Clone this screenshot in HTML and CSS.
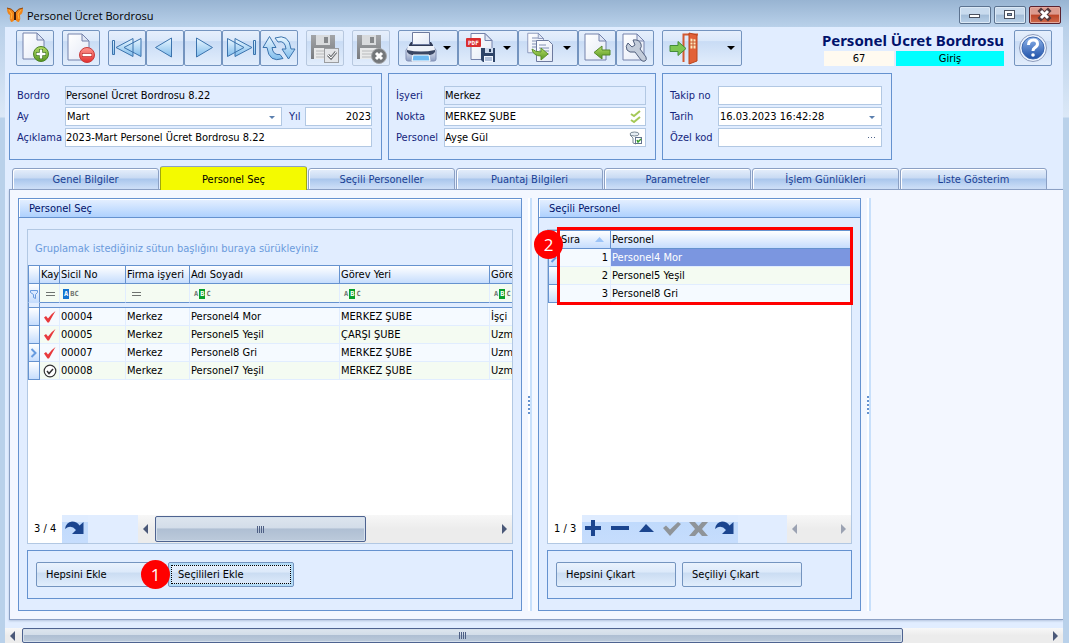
FILE: index.html
```html
<!DOCTYPE html>
<html lang="tr">
<head>
<meta charset="utf-8">
<title>Personel Ücret Bordrosu</title>
<link rel="stylesheet" href="styles.css">
</head>
<body>
<svg class="defs" aria-hidden="true">
  <defs>
    <linearGradient id="g-page" x1="0" y1="0" x2="1" y2="1"><stop offset="0" stop-color="#fff"/><stop offset="1" stop-color="#e3e9f6"/></linearGradient>
    <linearGradient id="g-green" x1="0" y1="0" x2="0" y2="1"><stop offset="0" stop-color="#b5dd66"/><stop offset="1" stop-color="#559520"/></linearGradient>
    <linearGradient id="g-red" x1="0" y1="0" x2="0" y2="1"><stop offset="0" stop-color="#ff9a92"/><stop offset="1" stop-color="#e32d2d"/></linearGradient>
    <linearGradient id="g-blue" x1="0" y1="0" x2="0" y2="1"><stop offset="0" stop-color="#eaf7ff"/><stop offset="1" stop-color="#7fbcec"/></linearGradient>
    <linearGradient id="g-steel" x1="0" y1="0" x2="0" y2="1"><stop offset="0" stop-color="#fff"/><stop offset="1" stop-color="#8e9fc4"/></linearGradient>
    <linearGradient id="g-help" x1="0" y1="0" x2="0" y2="1"><stop offset="0" stop-color="#8fb4ea"/><stop offset="1" stop-color="#1d50a8"/></linearGradient>
    <linearGradient id="g-grey" x1="0" y1="0" x2="0" y2="1"><stop offset="0" stop-color="#a3a5a8"/><stop offset="1" stop-color="#797c80"/></linearGradient>
    <symbol id="i-page" viewBox="0 0 24 28"><path d="M1 1h14l7 7v19H1z" fill="url(#g-page)" stroke="#7482ab"/><path d="M15 1v7h7z" fill="#dfe6f5" stroke="#7482ab"/></symbol>
    <symbol id="i-redo" viewBox="0 0 26 28"><path d="M3 14Q4 7 10 6.500q5 0 7.500 4L21.500 7v12H10l4-4Q9 9 3 14z" fill="#1b458f"/></symbol>
    <symbol id="i-tick" viewBox="0 0 14 14"><path d="M1 7.500l2-1.500 2 2.500Q8 4 12.500 1 9.500 6 6 12.500H4.500z" fill="#e8393c"/></symbol>
    <symbol id="i-floppy" viewBox="0 0 26 26"><path d="M1 1h24v24H1z" fill="url(#g-grey)"/><path d="M6 1h14v10H6z" fill="#d9dbdd"/><path d="M14 3h4v6h-4z" fill="#85888b"/><path d="M4 14h18v11H4z" fill="#e8e9ea"/><path d="M6 17h14M6 20h14M6 23h14" stroke="#b8babc"/></symbol>
  </defs>
</svg>

<header class="titlebar">
  <svg class="app-icon" viewBox="0 0 16 16"><path d="M8 6Q5 1 0 1q0 6 3 7-1 4 1 7 3 0 4-4 1 4 4 4 2-3 1-7 3-1 3-7-5 0-8 5z" fill="#f08418"/><path d="M2 3l3 4-1 5M14 3l-3 4 1 5" stroke="#ffb640" fill="none"/><path d="M0 1q5 0 8 5 3-5 8-5" stroke="#8b4914" fill="none"/><path d="M8 5v8" stroke="#41200e" stroke-width="2"/></svg>
  <span class="window-name">Personel Ücret Bordrosu</span>
  <div class="window-buttons">
    <button class="win-btn" aria-label="Küçült"><svg viewBox="0 0 29 16"><rect x="9.500" y="7.500" width="10" height="3" fill="#fff" stroke="#4a5160"/></svg></button>
    <button class="win-btn" aria-label="Ekranı kapla"><svg viewBox="0 0 29 16"><rect x="9.500" y="3.500" width="10" height="8" fill="#fff" stroke="#4a5160"/><rect x="12.500" y="6.500" width="4" height="2" fill="#8aa5c4" stroke="#4a5160"/></svg></button>
    <button class="win-btn close" aria-label="Kapat"><svg viewBox="0 0 29 16"><path d="M11 4l7 7M18 4l-7 7" stroke="#53383d" stroke-width="5" stroke-linecap="square"/><path d="M11 4l7 7M18 4l-7 7" stroke="#fff" stroke-width="3"/></svg></button>
  </div>
</header>

<main class="client">
  <div class="toolbar">
    <button class="tool" aria-label="Yeni"><svg viewBox="1 1 36 34"><use href="#i-page" x="6" y="2" width="24" height="28"/><circle cx="25" cy="24" r="7.500" fill="url(#g-green)" stroke="#4b8226"/><path d="M25 19v10M20 24h10" stroke="#3e731c" stroke-width="4"/><path d="M25 19.500v9M20.500 24h9" stroke="#fff" stroke-width="2.500"/></svg></button>
    <button class="tool" aria-label="Sil"><svg viewBox="1 1 36 34"><use href="#i-page" x="5" y="3" width="24" height="28"/><circle cx="25" cy="25" r="7.500" fill="url(#g-red)" stroke="#c93a3a"/><path d="M20 25h10" stroke="#b92222" stroke-width="4"/><path d="M20.500 25h9" stroke="#fff" stroke-width="2.500"/></svg></button>
    <div class="group">
      <button class="tool" aria-label="İlk"><svg viewBox="1 1 36 34" fill="url(#g-blue)" stroke="#3b73ad"><path d="M4.500 10.500h2v14h-2zM8 17.500L25 8.500v18zM16 17.500L33 8.500v18z"/></svg></button>
      <button class="tool" aria-label="Önceki"><svg viewBox="1 1 36 34" fill="url(#g-blue)" stroke="#3b73ad"><path d="M9.500 17.500L25.500 8v19z"/></svg></button>
      <button class="tool" aria-label="Sonraki"><svg viewBox="1 1 36 34" fill="url(#g-blue)" stroke="#3b73ad"><path d="M28.500 17.500L12.500 8v19z"/></svg></button>
      <button class="tool" aria-label="Son"><svg viewBox="1 1 36 34" fill="url(#g-blue)" stroke="#3b73ad"><path d="M31.500 10.500h2v14h-2zM22 17.500L5.500 8.500v18zM30 17.500L13 8.500v18z"/></svg></button>
      <button class="tool" aria-label="Yenile"><svg viewBox="1 1 36 34" fill="url(#g-blue)" stroke="#3b73ad" stroke-linejoin="round"><path d="M15 8q14-5 16 11h4l-6.500 10-6.500-10h4q-1-9-8-7z"/><path d="M23 28.500q-14 5-16-11H3L9.500 6.500 16 17.500h-4q1 8 8 7z"/></svg></button>
    </div>
    <button class="tool" disabled aria-label="Kaydet"><svg viewBox="1 1 36 34"><use href="#i-floppy" x="4" y="4" width="26" height="26"/><rect x="18.500" y="18.500" width="14" height="14" fill="#e4e6e9" stroke="#9b9da0"/><path d="M22 25l3 3 5-6" fill="none" stroke="#74777b" stroke-width="3"/><path d="M22 25l3 3 5-6" fill="none" stroke="#fff"/></svg></button>
    <button class="tool" disabled aria-label="Vazgeç"><svg viewBox="1 1 36 34"><use href="#i-floppy" x="4" y="4" width="26" height="26"/><circle cx="27" cy="26" r="7.500" fill="#74777a" stroke="#a4a6a9"/><path d="M24 23l6 6M30 23l-6 6" stroke="#fff" stroke-width="3"/></svg></button>
    <div class="group">
      <button class="tool drop" aria-label="Yazdır"><svg viewBox="1 1 58 34"><path d="M11 16h24l3 4v9q0 2-2 2H10q-2 0-2-2v-9z" fill="url(#g-steel)" stroke="#8290b5"/><path d="M13 12h20l2 3v3H11v-3z" fill="#303b56"/><path d="M14.500 2.500h17v12h-17z" fill="url(#g-page)" stroke="#6d7a9e"/><path d="M9 19h28v3q-2 3-5 3H14q-3 0-5-3z" fill="#3a4764"/><path d="M10 16h26l1 4q-14 3-28 0z" fill="#eef2f9"/><path d="M15 25h16l1 6H14z" fill="#6dbaf3" stroke="#fff"/><path d="M45 16h8l-4 4z" fill="#000"/></svg></button>
      <button class="tool drop" aria-label="PDF kaydet"><svg viewBox="1 1 58 34"><use href="#i-page" x="12" y="2" width="24" height="29"/><rect x="8" y="8" width="15" height="9" rx="1" fill="#d92e30"/><text x="10" y="15" class="pdf-label">PDF</text><path d="M23 18h14v14H25l-2-2z" fill="#2e4468"/><path d="M27 18h8v5h-8z" fill="#cad7eb"/><path d="M31 19h2v3h-2z" fill="#253959"/><path d="M26 26h9v6h-9z" fill="#f2f6ff"/><path d="M27 28h7M27 30h7" stroke="#718bb5"/><path d="M45 16h8l-4 4z" fill="#000"/></svg></button>
      <button class="tool drop" aria-label="Kopyala"><svg viewBox="1 1 58 34"><use href="#i-page" x="9" y="2" width="18" height="22"/><path d="M14 8h6M14 11h8M14 14h8M14 17h5" stroke="#8290b5"/><path d="M18.500 10.500h12l4 4v17h-16z" fill="url(#g-page)" stroke="#6d7a9e"/><path d="M21 15h7M21 18h10M21 21h10M21 24h10" stroke="#8290b5"/><path d="M14 19q3 3 9 3v-4l7 6-7 6v-4q-8 0-9-7z" fill="url(#g-green)" stroke="#5c922c"/><path d="M45 16h8l-4 4z" fill="#000"/></svg></button>
      <button class="tool" aria-label="İçeri al"><svg viewBox="1 1 36 34"><use href="#i-page" x="6" y="3" width="24" height="28"/><path d="M16 22.500l8-6.500v4h8v5h-8v4z" fill="url(#g-green)" stroke="#55882b"/></svg></button>
      <button class="tool" aria-label="Ayarlar"><svg viewBox="1 1 36 34"><use href="#i-page" x="6" y="3" width="24" height="28"/><path d="M11 20q-2-4 1-7l4 4 3-2-2-5q6-1 8 4 1 3-1 5l6 8q1 3-1 4t-4-1l-6-8q-6 1-8-2z" fill="#c3ccda" stroke="#53617e"/></svg></button>
    </div>
    <button class="tool exit" aria-label="Çıkış"><svg viewBox="1 1 78 34"><path d="M21.500 32V4.500H36" fill="none" stroke="#d35a31" stroke-width="2"/><path d="M27 3l8 2v26l-8 3z" fill="#e26137" stroke="#b9461f"/><path d="M28.500 8.500l5 1v9h-5z" fill="#ffe9bd"/><path d="M31 9v10M28 12h6M28 15h6" stroke="#c75a30"/><path d="M8 15.500h8v-4l8 7-8 7v-4H8z" fill="#7dc652" stroke="#438c3a"/><path d="M65 16h8l-4 4z" fill="#000"/></svg></button>
    <div class="doc-status">
      <h1>Personel Ücret Bordrosu</h1>
      <div class="status-pair"><span class="doc-no">67</span><span class="doc-mode">Giriş</span></div>
    </div>
    <button class="tool" aria-label="Yardım"><svg viewBox="1 1 36 34"><circle cx="19" cy="18" r="13.500" fill="#edf4ff" stroke="#8c9bbb"/><circle cx="19" cy="18" r="11" fill="url(#g-help)" stroke="#3d69b0"/><path d="M14.500 15q0-5 5-5 4 0 4 4 0 2-3 4-1.500 1-1.500 3" fill="none" stroke="#fff" stroke-width="3"/><circle cx="19" cy="25" r="1.800" fill="#fff"/></svg></button>
  </div>

  <form class="head-panels">
    <fieldset class="box doc-fields">
      <label for="bordro">Bordro</label><input id="bordro" class="wide" readonly value="Personel Ücret Bordrosu 8.22">
      <label for="ay">Ay</label>
      <span class="field"><select id="ay"><option>Mart</option></select><svg class="field-mark" viewBox="0 0 14 14"><path d="M4 6h6l-3 3z" fill="#5a7fae"/></svg></span>
      <label class="year" for="yil">Yıl</label><input id="yil" class="num" value="2023">
      <label for="aciklama">Açıklama</label><input id="aciklama" class="wide" value="2023-Mart Personel Ücret Bordrosu 8.22">
    </fieldset>
    <fieldset class="box place-fields">
      <label for="isyeri">İşyeri</label><input id="isyeri" readonly value="Merkez">
      <label for="nokta">Nokta</label>
      <span class="field"><input id="nokta" value="MERKEZ ŞUBE"><svg class="field-mark" viewBox="0 0 14 14"><path d="M2 4l3 2 6-5M2 10l3 2 6-5" fill="none" stroke="#a5c957" stroke-width="2"/></svg></span>
      <label for="personel">Personel</label>
      <span class="field"><input id="personel" value="Ayşe Gül"><svg class="field-mark" viewBox="0 0 14 14"><ellipse cx="5.500" cy="3" rx="4.500" ry="2" fill="#e6edf3" stroke="#7b8995"/><path d="M1 4l3 3v5l3 1" fill="none" stroke="#7b8995"/><rect x="6.500" y="6.500" width="6" height="6" fill="#fff" stroke="#64748f"/><path d="M8 9l1 2 3-3" stroke="#37a028" fill="none" stroke-width="1.500"/></svg></span>
    </fieldset>
    <fieldset class="box track-fields">
      <label for="takip">Takip no</label><input id="takip">
      <label for="tarih">Tarih</label>
      <span class="field"><input id="tarih" value="16.03.2023 16:42:28"><svg class="field-mark" viewBox="0 0 14 14"><path d="M4 6h6l-3 3z" fill="#5a7fae"/></svg></span>
      <label for="ozel">Özel kod</label>
      <span class="field"><input id="ozel"><svg class="field-mark" viewBox="0 0 14 14"><path d="M3 6.500h1M6 6.500h1M9 6.500h1" stroke="#50658a"/></svg></span>
    </fieldset>
  </form>

  <div class="tabs" role="tablist">
    <button role="tab">Genel Bilgiler</button>
    <button role="tab" class="active" aria-selected="true">Personel Seç</button>
    <button role="tab">Seçili Personeller</button>
    <button role="tab">Puantaj Bilgileri</button>
    <button role="tab">Parametreler</button>
    <button role="tab">İşlem Günlükleri</button>
    <button role="tab">Liste Gösterim</button>
  </div>

  <div class="tab-page">
    <section class="panel">
      <h2>Personel Seç</h2>
      <div class="panel-body">
        <div class="grid-wrap">
          <div class="grid">
            <div class="group-hint">Gruplamak istediğiniz sütun başlığını buraya sürükleyiniz</div>
            <table class="people">
              <colgroup><col class="c-ind"><col class="c-state"><col class="c-no"><col class="c-firm"><col class="c-name"><col class="c-place"><col></colgroup>
              <thead>
                <tr><th></th><th>Kay</th><th>Sicil No</th><th>Firma işyeri</th><th>Adı Soyadı</th><th>Görev Yeri</th><th>Göre</th></tr>
              </thead>
              <tbody>
                <tr class="filter">
                  <td><svg class="cell-icon" viewBox="0 0 10 14"><path d="M1.500 4.500h7v2l-2 2v4l-2-1v-3l-3-2z" fill="#d9e8ff" stroke="#669be0"/></svg></td>
                  <td><i class="eq"></i></td>
                  <td><span class="abc start"><b>A</b>BC</span></td>
                  <td><i class="eq"></i></td>
                  <td><span class="abc">A<b>B</b>C</span></td>
                  <td><span class="abc">A<b>B</b>C</span></td>
                  <td><span class="abc">A<b>B</b>C</span></td>
                </tr>
                <tr class="band"><td></td><td colspan="6"></td></tr>
                <tr><td></td><td><svg class="state" viewBox="0 0 14 14"><use href="#i-tick"/></svg></td><td>00004</td><td>Merkez</td><td>Personel4 Mor</td><td>MERKEZ ŞUBE</td><td>İşçi</td></tr>
                <tr class="alt"><td></td><td><svg class="state" viewBox="0 0 14 14"><use href="#i-tick"/></svg></td><td>00005</td><td>Merkez</td><td>Personel5 Yeşil</td><td>ÇARŞI ŞUBE</td><td>Uzm</td></tr>
                <tr><td><svg class="cell-icon" viewBox="0 0 10 14"><path d="M2.500 3l4 4-4 4" fill="none" stroke="#669be0" stroke-width="2"/></svg></td><td><svg class="state" viewBox="0 0 14 14"><use href="#i-tick"/></svg></td><td>00007</td><td>Merkez</td><td>Personel8 Gri</td><td>MERKEZ ŞUBE</td><td>Uzm</td></tr>
                <tr class="alt"><td></td><td><svg class="state" viewBox="0 0 14 14"><circle cx="7" cy="7" r="5.800" fill="#fff" stroke="#333" stroke-width="1.200"/><path d="M4 7l2 2.500L10 5" fill="none" stroke="#333" stroke-width="1.500"/></svg></td><td>00008</td><td>Merkez</td><td>Personel7 Yeşil</td><td>MERKEZ ŞUBE</td><td>Uzm</td></tr>
              </tbody>
            </table>
            <div class="grid-foot">
              <span class="count">3 / 4</span>
              <button class="nav" aria-label="Git"><svg viewBox="0 0 26 28"><use href="#i-redo" width="26" height="28"/></svg></button>
              <div class="hscroll people-scroll"><i class="arr left"></i><div class="track"><div class="thumb"><i class="grip"></i></div></div><i class="arr right"></i></div>
            </div>
          </div>
        </div>
        <div class="box actions">
          <button class="act long">Hepsini Ekle</button>
          <div class="marked"><button class="act long focused">Seçilileri Ekle</button><span class="step step-one">1</span></div>
        </div>
      </div>
    </section>

    <div class="splitter"><i></i></div>

    <section class="panel">
      <h2>Seçili Personel</h2>
      <div class="panel-body">
        <div class="grid-wrap">
          <div class="grid">
            <table class="picked">
              <colgroup><col class="c-ind"><col class="c-order"><col></colgroup>
              <thead><tr><th></th><th>Sıra<svg class="sort" viewBox="0 0 9 5"><path d="M0 5l4.500-5L9 5z" fill="#9cc4f8"/></svg></th><th>Personel</th></tr></thead>
              <tbody>
                <tr><td><svg class="cell-icon" viewBox="0 0 10 14"><path d="M2.500 3l4 4-4 4" fill="none" stroke="#669be0" stroke-width="2"/></svg></td><td>1</td><td class="selected">Personel4 Mor</td></tr>
                <tr class="alt"><td></td><td>2</td><td>Personel5 Yeşil</td></tr>
                <tr><td></td><td>3</td><td>Personel8 Gri</td></tr>
              </tbody>
            </table>
            <div class="grid-foot">
              <span class="count">1 / 3</span>
              <button class="nav" aria-label="Ekle"><svg viewBox="0 0 26 28"><path d="M9 5h4v6h6v4h-6v6H9v-6H3v-4h6z" fill="#1b458f"/></svg></button>
              <button class="nav" aria-label="Çıkar"><svg viewBox="0 0 26 28"><path d="M3 11h18v4H3z" fill="#1b458f"/></svg></button>
              <button class="nav" aria-label="Düzenle"><svg viewBox="0 0 26 28"><path d="M5 17l7-8 8 8z" fill="#1b458f"/></svg></button>
              <button class="nav" disabled aria-label="Onayla"><svg viewBox="0 0 26 28"><path d="M3 13l3-2.500 4 4L18 7l3 2-11 12z" fill="#8f9499"/></svg></button>
              <button class="nav" disabled aria-label="Vazgeç"><svg viewBox="0 0 26 28"><path d="M3 7h6l3.500 4L16 7h6l-6 7 6 7h-6l-3.500-4L9 21H3l6-7z" fill="#8f9499"/></svg></button>
              <button class="nav" aria-label="Git"><svg viewBox="0 0 26 28"><use href="#i-redo" width="26" height="28"/></svg></button>
              <div class="hscroll picked-scroll"><i class="arr left"></i><i class="arr right"></i></div>
            </div>
          </div>
          <div class="highlight"></div>
          <span class="step step-two">2</span>
        </div>
        <div class="box actions">
          <button class="act">Hepsini Çıkart</button>
          <button class="act">Seçiliyi Çıkart</button>
        </div>
      </div>
    </section>

    <div class="splitter"><i></i></div>
  </div>

  <div class="hscroll page-scroll"><i class="arr left"></i><div class="track"><div class="thumb"><i class="grip"></i></div></div><i class="arr right"></i></div>
</main>
</body>
</html>
```
FILE: styles.css
```css
* { box-sizing: border-box; }

html, body { height: 100%; }

body {
  margin: 0;
  display: flex;
  flex-direction: column;
  overflow: hidden;
  background: linear-gradient(#b9d0e9 27px, #dbe8f7 117px, #b9d1ea 118px);
  font: 11px/14px "DejaVu Sans Condensed", "Noto Sans", sans-serif;
  color: #000;
}

button, input, select { font: inherit; color: inherit; margin: 0; }
button { padding: 0; }
svg { display: block; }
h1, h2 { margin: 0; }
.defs { position: absolute; width: 0; height: 0; }

/* window frame */
.titlebar {
  flex: none;
  height: 27px;
  padding: 0 8px 0 7px;
  display: flex;
  align-items: center;
  gap: 4px;
  background: linear-gradient(#98b4d2, #b9d1ea);
}
.app-icon { width: 16px; height: 16px; margin-top: 3px; }
.window-name { flex: 1; margin-top: 4px; font: 11px/16px "Open Sans", sans-serif; }
.window-buttons { display: flex; gap: 3px; margin-top: 3px; }
.win-btn {
  width: 32px;
  height: 18px;
  border: 1px solid #5c7390;
  border-radius: 2px;
  background: linear-gradient(#c9dbee 45%, #a3bdd8 50%, #b9d0e8);
  box-shadow: inset 0 0 0 1px #dce9f6;
}
.win-btn svg { width: 29px; height: 16px; }
.win-btn.close {
  border-color: #5a2230;
  background: linear-gradient(#dc9a8e 45%, #bc4428 50%, #cf6a4c);
  box-shadow: inset 0 0 0 1px #e5a99c;
}

.client {
  flex: 1;
  min-height: 0;
  margin: 0 6px 0 5px;
  display: flex;
  flex-direction: column;
  background: #e1edff;
}

/* toolbar */
.toolbar {
  flex: none;
  display: flex;
  align-items: center;
  gap: 8px;
  padding: 3px 11px 7px;
}
.group { display: flex; }
.tool {
  flex: none;
  width: 38px;
  height: 36px;
  border: 1px solid #7494bf;
  border-radius: 2px;
  background: linear-gradient(#e6effc, #dae8fa 30%, #c9dcf5 31%, #e2edfc);
}
.tool svg { width: 36px; height: 34px; }
.tool.drop { width: 60px; }
.tool.drop svg { width: 58px; }
.tool.exit { width: 80px; }
.tool.exit svg { width: 78px; }
.tool:disabled { border-color: #b7c8df; }
.pdf-label { font: bold 6px "DejaVu Sans Mono", monospace; fill: #fff; }
.doc-status { margin-left: auto; margin-right: 2px; }
.doc-status h1 {
  font: bold 15px/21px "Noto Sans", sans-serif;
  color: #00126b;
  text-align: right;
}
.status-pair { display: flex; justify-content: flex-end; gap: 2px; line-height: 15px; text-align: center; }
.doc-no { width: 70px; background: #fffaf0; }
.doc-mode { width: 108px; background: #0ff; }

/* document fields */
.head-panels {
  flex: none;
  display: grid;
  grid-template-columns: 373fr 268fr 230fr 165fr;
  gap: 6px;
  margin-left: 4px;
}
.box { margin: 0; border: 1px solid #6592cf; }
fieldset.box {
  min-width: 0;
  height: 87px;
  padding: 12px 9px 0 7px;
  display: grid;
  grid-auto-rows: 19px;
  row-gap: 2px;
  align-items: center;
  color: #14257d;
}
.doc-fields { grid-template-columns: 48px 1fr 23px 67px; }
.doc-fields .wide { grid-column: 2 / -1; }
.place-fields { grid-template-columns: 48px 1fr; }
.track-fields { grid-template-columns: 48px 1fr; }
.year { padding-left: 7px; }
.field { position: relative; display: block; min-width: 0; }
.box input, .box select {
  display: block;
  width: 100%;
  min-width: 0;
  height: 19px;
  padding: 0;
  border: 1px solid #b2c8e3;
  border-radius: 0;
  background: #fff;
  color: #000;
  appearance: none;
}
.box select, .track-fields input { padding: 0 1px; }
.box input[readonly] { background: #e1edff; }
.box .num { text-align: right; }
.field-mark { position: absolute; right: 3px; top: 3px; width: 14px; height: 14px; pointer-events: none; }

/* tabs */
.tabs {
  flex: none;
  height: 30px;
  padding: 6px 16px 0 7px;
  display: flex;
  align-items: flex-end;
  gap: 1px;
}
.tabs button {
  flex: 1;
  min-width: 0;
  height: 22px;
  padding-top: 2px;
  border: 1px solid #8ba0c4;
  border-radius: 3px 3px 0 0;
  background: linear-gradient(#e6effb, #c8daf3 45%, #a9c6ec 50%, #cfe0f8);
  box-shadow: inset 1px 1px 0 #fff;
  color: #1a3f94;
}
.tabs .active {
  position: relative;
  z-index: 1;
  height: 24px;
  border-bottom: 0;
  background: #f4fa00;
  border-color: #8ba0c4 #a0a80c;
  box-shadow: none;
  color: #000;
}

.tab-page {
  flex: 1;
  min-height: 0;
  margin: -1px 0 0 4px;
  padding: 8px 0 8px 8px;
  display: grid;
  grid-template-columns: 504fr 16px 323fr 16px 186fr;
  grid-template-rows: minmax(0, 1fr);
  border: 1px solid #8ba0c4;
  border-right: 0;
  background: #f3f7ff;
  box-shadow: 0 1px 2px #b3c4dd;
}

/* panels */
.panel {
  min-width: 0;
  display: flex;
  flex-direction: column;
  border: 1px solid #6592cf;
  background: #e1edff;
}
.panel h2 {
  flex: none;
  height: 19px;
  padding: 1px 0 0 10px;
  border-bottom: 1px solid #6592cf;
  background: linear-gradient(#e6f0ff, #aed1fe);
  box-shadow: inset 1px 1px 0 #fff;
  font: inherit;
  line-height: 18px;
  color: #00126b;
}
.panel-body {
  flex: 1;
  min-height: 0;
  padding: 11px 8px;
  display: flex;
  flex-direction: column;
  gap: 6px;
}
.grid-wrap { position: relative; flex: 1; min-height: 0; display: flex; }
.grid {
  flex: 1;
  min-width: 0;
  display: flex;
  flex-direction: column;
  overflow: hidden;
  border: 1px solid #b2c8e3;
  background: #fff;
}
.group-hint { flex: none; padding: 12px 7px 9px; background: #e1edff; color: #6b9bdc; }

table { width: 100%; table-layout: fixed; border-collapse: separate; border-spacing: 0; }
.c-ind { width: 12px; }
.c-state { width: 20px; }
.c-no { width: 66px; }
.c-firm { width: 64px; }
.c-name, .c-place { width: 150px; }
.c-order { width: 51px; }
th, td {
  height: 18px;
  padding: 1px 0 0 1px;
  overflow: hidden;
  white-space: nowrap;
  text-align: left;
  font-weight: normal;
}
th {
  height: 19px;
  border: 1px solid #6592cf;
  border-left: 0;
  background: linear-gradient(#fff, #c6ddfd);
}
td {
  border-right: 1px solid #e1edff;
  border-bottom: 1px solid #e1edff;
  background: #f5faff;
}
.alt td, .filter td { background: #f4fbf2; }
th:last-child, td:last-child { border-right: 0; }
th:first-child, td:first-child {
  padding: 0;
  border: solid #6592cf;
  border-width: 0 1px 1px;
  background: linear-gradient(#fff, #c6ddfd);
}
th:first-child { border-top-width: 1px; }
.filter td { height: 19px; border-bottom-color: #6592cf; }
.filter td:first-child { border-bottom-color: #c6ddfd; }
.band td { height: 5px; border-bottom-color: #6592cf; background: #e1edff; }
.cell-icon { width: 10px; height: 14px; }
.state { width: 14px; height: 14px; margin-left: 2px; }
.eq { display: block; width: 9px; height: 4px; margin-left: 5px; border: solid #6e7370; border-width: 1px 0; }
.abc { display: flex; align-items: center; gap: 1px; padding-left: 3px; font: bold 7px/10px "DejaVu Sans Mono", monospace; color: #6e7370; }
.abc b { padding: 0 1px; background: #0aa02c; color: #fff; }
.abc.start { padding-left: 2px; }
.abc.start b { background: #1173d0; }
.picked td:nth-child(2) { text-align: right; padding-right: 2px; }
.picked th:nth-child(2) { position: relative; }
.picked .selected { background: #7b96e0; color: #fff; }
.sort { position: absolute; right: 6px; top: 6px; width: 9px; height: 5px; }

.grid-foot { flex: none; height: 28px; margin-top: auto; display: flex; background: #e1edff; }
.count { width: 34px; padding-left: 6px; background: #fff; line-height: 28px; }
.nav { width: 26px; border: 0; background: linear-gradient(#dfecff 25%, #c0dafc 26%, #c6ddfd); }
.nav svg { width: 26px; height: 28px; }

/* scroll bars */
.hscroll { display: flex; align-items: center; background: linear-gradient(#f7f7f7, #ececec 50%); }
.people-scroll { flex: 1; margin-left: 50px; padding: 0 5px; gap: 7px; }
.picked-scroll { width: 64px; margin-left: auto; padding: 0 5px; justify-content: space-between; }
.picked-scroll .arr { opacity: .5; }
.track { flex: 1; align-self: stretch; padding: 1px 0; display: flex; }
.thumb {
  border: 1px solid #4e6390;
  border-radius: 2px;
  background: linear-gradient(#dde5ee, #d3dde9 45%, #afbfd3 50%, #bccadb);
  box-shadow: inset 0 0 0 1px #d5e0ec;
  display: flex;
  align-items: center;
  justify-content: center;
}
.people-scroll .thumb { width: 62%; }
.grip { width: 7px; height: 7px; background: repeating-linear-gradient(90deg, #4e5f84 0 1px, transparent 1px 2px); }
.arr { border: solid transparent; border-width: 5px 0; }
.arr.left { border-right: 5px solid #4a5878; }
.arr.right { border-left: 5px solid #4a5878; }
.page-scroll { flex: none; height: 15px; margin-top: 8px; padding: 0 5px; gap: 7px; }
.page-scroll .track { padding: 0; }
.page-scroll .thumb { width: 86%; }

/* action rows */
.actions { flex: none; height: 49px; padding: 11px 8px; display: flex; gap: 6px; }
.act {
  width: 120px;
  height: 25px;
  padding-left: 9px;
  border: 1px solid #7494bf;
  border-radius: 2px;
  background: linear-gradient(#eaf2fd, #dce9fa 40%, #cadcf2 43%, #e1edfc);
  text-align: left;
}
.act.long { width: 126px; }
.act.focused { box-shadow: inset 0 0 0 2px #b4dcf8; outline: 1px dotted #000; outline-offset: -4px; }
.marked { position: relative; }

/* step annotations */
.step {
  position: absolute;
  width: 29px;
  height: 29px;
  border-radius: 50%;
  background: #f00;
  color: #fff;
  font: 17px/29px "Open Sans", sans-serif;
  text-align: center;
}
.step-one { left: -27px; top: -2px; }
.step-two { left: -13px; top: 1px; }
.highlight { position: absolute; left: 10px; right: -1px; top: -2px; height: 78px; border: 3px solid #f00; }

.splitter { margin-left: 6px; width: 4px; display: flex; align-items: center; background: linear-gradient(90deg, #fff 0 2px, #c8e0fb 2px); }
.splitter i { width: 2px; height: 18px; background: repeating-linear-gradient(#6592cf 0 2px, #fff 2px 4px); }
```
